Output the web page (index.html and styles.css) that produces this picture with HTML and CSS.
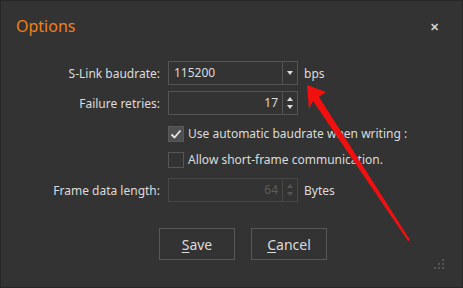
FILE: index.html
```html
<!DOCTYPE html>
<html lang="en">
<head>
    <meta charset="UTF-8">
    <title>Options</title>
    <link rel="stylesheet" href="styles.css">
</head>
<body>
    <div class="dialog">
        <div class="titlebar">
            <span class="title">Options</span>
            <span class="close">&#x2715;</span>
        </div>

        <!-- Settings form -->
        <div class="form">
            <div class="row row-first">
                <label class="label">S-Link baudrate:</label>
                <div class="field combo">
                    <span class="value">115200</span>
                    <span class="side"><span class="tri-down"></span></span>
                </div>
                <span class="unit">bps</span>
            </div>
            <div class="row row-spin">
                <label class="label">Failure retries:</label>
                <div class="field spin">
                    <span class="value num">17</span>
                    <span class="side arrows"><span class="tri-up"></span><span class="tri-down"></span></span>
                </div>
            </div>
            <div class="row row-check">
                <span class="label"></span>
                <span class="check checked">
                    <svg width="14" height="14" viewBox="0 0 14 14"><path d="M2.5 7.5 L5.5 10.5 L11.5 3.5" fill="none" stroke="#e6e6e6" stroke-width="1.8"/></svg>
                </span>
                <span class="check-text">Use automatic baudrate when writing :</span>
            </div>
            <div class="row row-check2">
                <span class="label"></span>
                <span class="check"></span>
                <span class="check-text">Allow short-frame communication.</span>
            </div>
            <div class="row row-frame">
                <label class="label">Frame data length:</label>
                <div class="field spin disabled">
                    <span class="value num">64</span>
                    <span class="side arrows"><span class="tri-up"></span><span class="tri-down"></span></span>
                </div>
                <span class="unit">Bytes</span>
            </div>
        </div>

        <div class="buttons">
            <button class="btn"><u>S</u>ave</button>
            <button class="btn"><u>C</u>ancel</button>
        </div>

        <svg class="grip" width="12" height="12" viewBox="0 0 12 12">
            <rect x="8" y="0" width="2" height="2" fill="#555"/>
            <rect x="4" y="4" width="2" height="2" fill="#555"/>
            <rect x="8" y="4" width="2" height="2" fill="#555"/>
            <rect x="0" y="8" width="2" height="2" fill="#555"/>
            <rect x="4" y="8" width="2" height="2" fill="#555"/>
            <rect x="8" y="8" width="2" height="2" fill="#555"/>
        </svg>

        <!-- red annotation arrow -->
        <svg class="arrow" width="463" height="288" viewBox="0 0 463 288">
            <polygon points="307,85 326,92 319,97 410,240 408,241 313,101 309,109" fill="#f01010"/>
        </svg>
    </div>
</body>
</html>
```

FILE: styles.css
```css
html, body {
    margin: 0;
    padding: 0;
}
body {
    font-family: "Noto Sans", "Open Sans", sans-serif;
    font-size: 12px;
    color: #dcdcdc;
    background-color: #333333;
}
.dialog {
    position: relative;
    width: 463px;
    height: 288px;
    box-sizing: border-box;
    border: 1px solid #272727;
    background-color: #333333;
    overflow: hidden;
}
.titlebar {
    display: flex;
    align-items: center;
    justify-content: space-between;
    height: 50px;
    padding: 0 23px 0 15px;
}
.title {
    font-size: 16px;
    color: #f0801a;
    margin-top: -1px;
}
.close {
    font-size: 11px;
    color: #cfcfcf;
    font-weight: bold;
}
.form {
    display: flex;
    flex-direction: column;
}
.row {
    display: flex;
    align-items: center;
}
.row-first {
    margin-top: 10px;
}
.row-spin {
    margin-top: 6px;
}
.row-check {
    margin-top: 10px;
}
.row-check2 {
    margin-top: 9px;
}
.row-frame {
    margin-top: 10px;
}
.label {
    width: 159px;
    padding-right: 8px;
    text-align: right;
    flex-shrink: 0;
}
.field {
    display: flex;
    width: 128px;
    height: 22px;
    border: 1px solid #545454;
}
.value {
    flex: 1;
    padding: 0 5px;
    line-height: 22px;
}
.num {
    text-align: right;
    padding-right: 4px;
}
.side {
    width: 14px;
    border-left: 1px solid #545454;
    display: flex;
    align-items: center;
    justify-content: center;
}
.arrows {
    flex-direction: column;
    gap: 4px;
}
.tri-down, .tri-up {
    width: 0;
    height: 0;
    border-left: 3.5px solid transparent;
    border-right: 3.5px solid transparent;
}
.tri-down {
    border-top: 4px solid #dcdcdc;
}
.tri-up {
    border-bottom: 4px solid #dcdcdc;
}
.unit {
    margin-left: 6px;
}
.disabled {
    border-color: #474747;
}
.disabled .value {
    color: #5c5c5c;
}
.disabled .side {
    border-left-color: #474747;
}
.disabled .tri-down {
    border-top-color: #555;
}
.disabled .tri-up {
    border-bottom-color: #555;
}
.check {
    width: 14px;
    height: 14px;
    border: 1px solid #555555;
    display: flex;
    align-items: center;
    justify-content: center;
    flex-shrink: 0;
}
.checked {
    background-color: #4f4f4f;
    border-color: #5a5a5a;
}
.check-text {
    margin-left: 4px;
}
.buttons {
    display: flex;
    gap: 16px;
    margin: 26px 0 0 158px;
}
.btn {
    width: 76px;
    height: 32px;
    background: transparent;
    border: 1px solid #585858;
    color: #dcdcdc;
    font-family: inherit;
    font-size: 14px;
    padding: 0;
}
.btn u {
    text-underline-offset: 2px;
}
.grip {
    position: absolute;
    right: 16px;
    bottom: 16px;
}
.arrow {
    position: absolute;
    left: -1px;
    top: -1px;
}
```
